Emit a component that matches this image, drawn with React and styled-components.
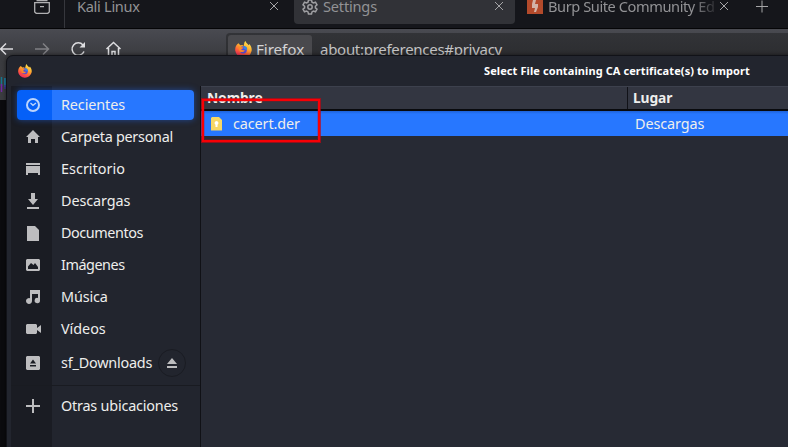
import React from "react";
import styled, { createGlobalStyle } from "styled-components";

const GlobalStyle = createGlobalStyle`
  * { box-sizing: border-box; }
  body { margin: 0; background: #0b0b0e; overflow: hidden; font-family: "Noto Sans", sans-serif; }
  svg { display: block; flex: none; }
`;

const Browser = styled.div`
  position: relative;
  width: 788px;
  height: 447px;
  overflow: hidden;
  background: #0b0b0e;
`;

const TabBar = styled.div`
  display: flex;
  height: 28px;
  background: #15161b;
  color: #929295;
  font-size: 14.6px;
`;

const PinnedArea = styled.div`
  width: 65px;
  border-right: 1px solid #36373d;
  padding-left: 34px;
`;

const Tab = styled.div`
  display: flex;
  flex: none;
  width: ${(p) => p.$width}px;
  height: ${(p) => (p.$active ? 24 : 28)}px;
  padding-left: ${(p) => p.$pad}px;
  background: ${(p) => (p.$active ? "#313237" : "transparent")};
  border-radius: 0 0 4px 4px;
`;

const TabTitle = styled.span`
  flex: 1;
  min-width: 0;
  height: 19px;
  line-height: 13px;
  margin-left: ${(p) => p.$gap || 0}px;
  letter-spacing: ${(p) => p.$track || 0}px;
  white-space: nowrap;
  ${(p) => p.$fade && "mask-image: linear-gradient(90deg, #000 84%, transparent 101%);"}
`;

const NavBar = styled.div`
  display: flex;
  height: 72px;
  border-top: 1px solid #050507;
  background: linear-gradient(#494a51, #3a3b3f 28px, #3b3c40);
`;

const NavIcons = styled.div`
  width: 226px;
  padding-top: 12px;
`;

const UrlBar = styled.div`
  flex: 1;
  display: flex;
  height: 40px;
  margin-top: 4px;
  padding: 2px 0 0 2px;
  background: linear-gradient(#323337, #2c2d30 24px);
  border-radius: 4px 0 0 4px;
  color: #c5c5c6;
  font-size: 15.3px;
  line-height: 30px;
`;

const Address = styled.span`
  font-size: 15px;
  line-height: 29px;
  letter-spacing: -0.28px;
`;

const Identity = styled.div`
  display: flex;
  gap: 4px;
  width: 84px;
  height: 32px;
  padding: 6px 0 0 7px;
  margin-right: 8px;
  border-radius: 3px;
  background: #49494d;
  color: #d5d5d6;
  line-height: 17px;
  letter-spacing: -0.1px;
`;

const Dialog = styled.section`
  position: absolute;
  left: 6px;
  top: 55px;
  width: 800px;
  height: 420px;
  border: 1px solid #111218;
  border-top-left-radius: 7px;
  background: #22252e;
  box-shadow: 0 0 4px #0008;
  color: #eeeeec;
`;

const TitleBar = styled.header`
  display: flex;
  align-items: center;
  height: 30px;
  padding-left: 11px;
`;

const Title = styled.h1`
  margin: -2px 0 0 452px;
  font-size: 11px;
  font-weight: 700;
  letter-spacing: 0.09px;
  white-space: nowrap;
  color: #fff;
`;

const Body = styled.div`
  display: flex;
  height: 390px;
  padding-left: 4px;
`;

const Sidebar = styled.nav`
  width: 190px;
  padding-top: 3px;
  border-right: 1px solid #101116;
  background: linear-gradient(90deg, #1a1c23 41px, #22252e 41px);
`;

const Place = styled.div`
  display: flex;
  align-items: center;
  height: ${(p) => p.$height || 32}px;
  padding-left: 15px;
  font-size: 14.4px;
  white-space: nowrap;
`;

const SelectedPlace = styled(Place)`
  height: 30px;
  width: 177px;
  margin: 1px 0 1px 6px;
  padding-left: 9px;
  border-radius: 4px;
  background: linear-gradient(90deg, #0560f8 35px, #2777ff 35px);
  box-shadow: 0 0 6px #2070ff80;
`;

const PlaceName = styled.span`
  margin: -2px 0 0 21px;
  letter-spacing: ${(p) => p.$track || 0}px;
`;

const EjectButton = styled.button`
  display: grid;
  place-items: center;
  width: 28px;
  height: 28px;
  margin-left: auto;
  margin-right: 14px;
  padding: 0;
  border: 1px solid #1a1c23;
  border-radius: 50%;
  background: #22252e;
`;

const Divider = styled.div`
  height: 1px;
  margin: 4px 0;
  background: #191b21;
`;

const Files = styled.main`
  flex: 1;
  background: #272a34;
  font-size: 14.4px;
`;

const Columns = styled.div`
  display: grid;
  grid-template-columns: 427px 1fr;
`;

const ColumnHeads = styled(Columns)`
  height: 25px;
  border-top: 1px solid #3d414d;
  border-bottom: 2px solid #090a0d;
  background: #333641;
  font-weight: 700;
  line-height: 22px;
`;

const ColumnHead = styled.div`
  padding-left: ${(p) => p.$pad}px;
  border-right: 1px solid #111218;
  font-size: 13.8px;
  letter-spacing: -0.1px;
`;

const FileRow = styled(Columns)`
  height: 25px;
  background: linear-gradient(#1e62d8, #2777ff 3px);
  line-height: 25px;
`;

const FileCell = styled.div`
  display: flex;
  align-items: center;
  gap: 10px;
  padding-left: ${(p) => p.$pad}px;
  letter-spacing: -0.1px;
`;

const Highlight = styled.div`
  position: absolute;
  left: 202px;
  top: 99px;
  width: 118px;
  height: 43px;
  border: 2px solid #f80005;
  box-shadow: 0 0 0 1px #c30410b0, inset 0 0 0 1px #c3041040;
`;

const Close = ({ width }) => (
  <svg width={width} height="12" viewBox={`0 0 ${width} 12`} stroke="#a5a5a7" strokeWidth="1">
    <path d="M1 2l8 8M9 2l-8 8" />
  </svg>
);

const Firefox = ({ size, id }) => (
  <svg width={size} height={size} viewBox="0 0 16 16">
    <defs>
      <linearGradient id={id} x1=".8" y1="0" x2=".3" y2="1">
        <stop offset="0" stopColor="#fff15a" />
        <stop offset=".4" stopColor="#ffab2e" />
        <stop offset=".7" stopColor="#ff593d" />
        <stop offset="1" stopColor="#ee2464" />
      </linearGradient>
    </defs>
    <path fill={`url(#${id})`} d="M3.2 2.2L5 4l2-.3L8 5l1-4 1-1c0 2 2 2.500 3 4l.6-1.200C15.300 5 16 7 15.600 9.500A7.800 7.800 0 0 1 .2 9C0 6 1 3.800 3.200 2.200z" />
    <circle cx="7.8" cy="8.3" r="3.4" fill="#584ad2" />
    <path fill="#3885df" d="M8 4.8c2.6-.2 4 2 3.2 4L8 7z" />
    <path fill="#ff8a26" d="M2.8 5.2L7.8 6c0 1-2 1.4-2 1.8.6 1.5 2.6.8 3.4 1.2-1 1.6-3.6 2-5 .6z" />
  </svg>
);

const iconPaths = {
  home: "M7 0l7 7h-2v6H9V9H5v4H2V7H0z",
  desktop: "M0 1h14v2H0zM0 4h14v9h-2v-2H2v2H0z",
  download: "M5 -1h4v6h3L7 11 2 5h3zM1 13h12v2H1z",
  document: "M1 0h8l4 4v11H1z",
  image: "M1 1h12l1 1v10l-1 1H1l-1-1V2zM2 11h10V9L9 5 7.5 7 5 5 2 8.5z",
  music: "M4 0h10v10.500a2.700 2.700 0 1 1-2-2.600V4H6v7a3 3 0 1 1-2-2.800z",
  video: "M1 2h9l1 1v3l4-3v8l-4-3v3l-1 1H1l-1-1V3z",
  drive: "M1 0h12l1 1v12l-1 1H1l-1-1V1zM7 3.500L4 7.500h6zM4 9v1.600h6V9z",
  plus: "M6 0h2v6h6v2H8v6H6V8H0V6h6z",
};

const PlaceIcon = ({ name }) => (
  <svg width="14" height="14" viewBox="0 0 14 14" overflow="visible" fill="#bdbdbf">
    {name === "recent" ? (
      <g fill="none" stroke="#bcd4fc">
        <circle cx="7" cy="7" r="6" strokeWidth="2" />
        <path d="M4.500 5L7 7.300 10 5" strokeWidth="1.300" />
      </g>
    ) : (
      <path fillRule="evenodd" d={iconPaths[name]} />
    )}
  </svg>
);

const places = [
  ["home", "Carpeta personal", -0.27],
  ["desktop", "Escritorio", 0.03],
  ["download", "Descargas", -0.1],
  ["document", "Documentos", -0.42],
  ["image", "Imágenes", -0.45],
  ["music", "Música", -0.15],
  ["video", "Vídeos", -0.03],
];

export default function App() {
  return (
    <Browser>
      <GlobalStyle />
      <TabBar>
        <PinnedArea>
          <svg width="17" height="15" viewBox="0 0 17 15" fill="none" stroke="#b0b0b2" strokeWidth="1.300">
            <path d="M.7 2.700h14.600v9.200l-1.500 1.400H2.200L.7 11.900zM2.500 .5h11M6 6.700h4" />
          </svg>
        </PinnedArea>
        <Tab $width={229} $pad={12}>
          <TabTitle $track={-0.3}>Kali Linux</TabTitle>
          <Close width={25} />
        </Tab>
        <Tab $width={221} $pad={8} $active>
          <svg width="16" height="15" viewBox="0 1 16 15" fill="none" stroke="#a0a0a3" strokeWidth="1.500">
            <path d="M6.500 1h3l.5 2.200 1.400.8 2.100-.8 1.500 2.600L13.400 7.300v1.500l1.600 1.400-1.500 2.600-2.100-.7-1.400.8-.5 2.200h-3L6 12.900l-1.400-.8-2.100.7L1 10.200l1.600-1.400V7.300L1 5.800l1.500-2.600 2.100.8L6 3.200z" />
            <circle cx="8" cy="8" r="2.200" />
          </svg>
          <TabTitle $gap={5} $track={-0.2}>Settings</TabTitle>
          <Close width={21} />
        </Tab>
        <Tab $width={273} $pad={12}>
          <svg width="16" height="14" viewBox="0 0 16 14">
            <path fill="#b34a2b" d="M0 0h16v14H0z" />
            <path fill="#d3b3a7" d="M6 0h3L8 4h3v3L9 12H7l1-4H5V4z" />
          </svg>
          <TabTitle $gap={5} $track={-0.42} $fade>Burp Suite Community Ed</TabTitle>
          <svg width="69" height="13" viewBox="0 0 69 13" stroke="#a5a5a7">
            <path d="M1 2l8 8M9 2l-8 8M37 6.500h12M43 .5v12" />
          </svg>
        </Tab>
      </TabBar>
      <NavBar>
        <NavIcons>
          <svg width="126" height="58" viewBox="0 41 126 58" fill="none" stroke="#dddde0" strokeWidth="1.500">
            <path d="M13 49H1M6 43.500L.5 49 6 54.500" />
            <path stroke="#808084" d="M35 49h13M43 43.500l5.500 5.500-5.500 5.500" />
            <path d="M83 45a6.200 6.200 0 1 0 1 6.500" />
            <path fill="#dddde0" stroke="none" d="M85 42v5.500h-5.500z" />
            <path d="M106.500 49l7-6.500 7 6.500M108.500 48v8h10v-8M112 56v-4.500h3V56" />
            <path stroke="#17778f" d="M1.500 77v9" />
            <path stroke="#7327a5" d="M1.500 84v8" />
            <path stroke="#1788b5" d="M5 78v9" />
            <path stroke="#40309d" d="M5 85v4" />
          </svg>
        </NavIcons>
        <UrlBar>
          <Identity><Firefox size={17} id="identity" />Firefox</Identity>
          <Address>about:preferences#privacy</Address>
        </UrlBar>
      </NavBar>
      <Dialog>
        <TitleBar>
          <Firefox size={14} id="titlebar" />
          <Title>Select File containing CA certificate(s) to import</Title>
        </TitleBar>
        <Body>
          <Sidebar>
            <SelectedPlace>
              <PlaceIcon name="recent" />
              <PlaceName $track={-0.1}>Recientes</PlaceName>
            </SelectedPlace>
            {places.map(([icon, name, track]) => (
              <Place key={icon}>
                <PlaceIcon name={icon} />
                <PlaceName $track={track}>{name}</PlaceName>
              </Place>
            ))}
            <Place $height={36}>
              <PlaceIcon name="drive" />
              <PlaceName $track={-0.2}>sf_Downloads</PlaceName>
              <EjectButton aria-label="Expulsar">
                <svg width="10" height="10" viewBox="0 0 10 10" fill="#bdbdbf">
                  <path d="M5 0l5 6H0zM0 8h10v2H0z" />
                </svg>
              </EjectButton>
            </Place>
            <Divider />
            <Place>
              <PlaceIcon name="plus" />
              <PlaceName $track={-0.2}>Otras ubicaciones</PlaceName>
            </Place>
          </Sidebar>
          <Files>
            <ColumnHeads>
              <ColumnHead $pad={6}>Nombre</ColumnHead>
              <ColumnHead $pad={5}>Lugar</ColumnHead>
            </ColumnHeads>
            <FileRow>
              <FileCell $pad={10}>
                <svg width="12" height="14" viewBox="0 0 12 14">
                  <path fill="#f7d766" d="M1 0h7l3 3v10.500H0V1z" />
                  <path fill="#fff" d="M5.500 4a2 2 0 0 1 1 3.700V10h-2V7.700a2 2 0 0 1 1-3.700z" />
                </svg>
                cacert.der
              </FileCell>
              <FileCell $pad={7}>Descargas</FileCell>
            </FileRow>
          </Files>
        </Body>
      </Dialog>
      <Highlight />
    </Browser>
  );
}
